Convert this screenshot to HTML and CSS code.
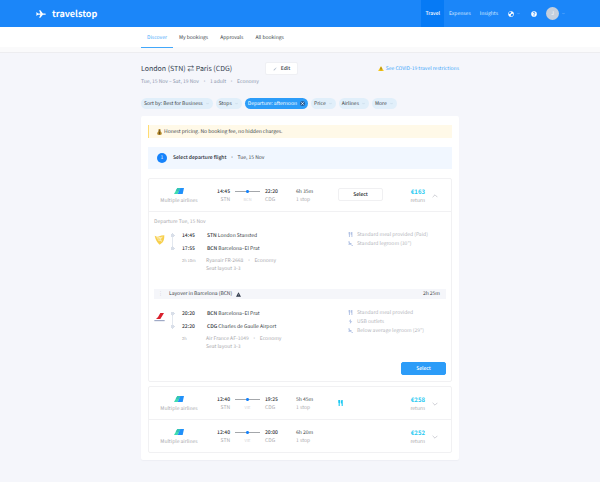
FILE: index.html
```html
<!DOCTYPE html>
<html lang="en">
<head>
  <meta charset="UTF-8">
  <meta name="viewport" content="width=device-width, initial-scale=1.0">
  <title>Travelstop</title>
  <link rel="stylesheet" href="styles.css">
</head>
<body>
  <!-- Shared icons -->
  <svg class="sprite" aria-hidden="true">
    <symbol id="down" viewBox="0 0 10 10"><path d="M1 3l4 4 4-4" fill="none" stroke="currentColor" stroke-width="1.5"/></symbol>
    <symbol id="up" viewBox="0 0 10 10"><path d="M1 7l4-4 4 4" fill="none" stroke="currentColor" stroke-width="1.5"/></symbol>
    <symbol id="multi" viewBox="0 0 30 18"><path d="M10 0h11L11 18H0z" fill="#3fdcb0"/><path d="M19 0h11l-4 18H11z" fill="#2090fa"/><path d="M10 0h9l-5 9H5z" fill="#35c3b5"/></symbol>
    <symbol id="meal" viewBox="0 0 12 16"><path d="M0 0h5v7L4 8v8H1V8L0 7zM7 2l2-2h3v16H9V9H7z" fill="currentColor"/></symbol>
    <symbol id="seat" viewBox="0 0 16 14"><path d="M1 0h4l1 5h5v4H3zM0 10h10v2H1zM11 9l2 3h3v2h-5z" fill="currentColor"/></symbol>
    <symbol id="usb" viewBox="0 0 12 14"><path d="M7 0L1 7h4l-1 7 7-8H7z" fill="currentColor"/></symbol>
  </svg>

  <header class="header">
    <a class="brand" href="#">
      <svg class="brand-icon" viewBox="0 0 32 24"><path d="M0 7h3l4 3h7L10 0h4l8 10h6q4 0 4 2t-4 2h-6l-8 10h-4l4-10H7l-4 3H0l2-5z" fill="#fff"/></svg>
      travelstop
    </a>
    <nav class="main-nav">
      <a class="active" href="#">Travel</a>
      <a href="#">Expenses</a>
      <a href="#">Insights</a>
      <button class="icon-button" aria-label="Language">
        <svg class="round-icon" viewBox="0 0 16 16"><circle cx="8" cy="8" r="7.500" fill="#fff"/><path d="M3 3l4-1 2 2-3 2 1 2H4L2 6zM9 8l4-1 1 2-2 4-3 1-2-2z" fill="#1b86f9"/></svg>
        <svg class="chevron"><use href="#down"/></svg>
      </button>
      <button class="help-button" aria-label="Help">
        <svg class="round-icon" viewBox="0 0 16 16"><circle cx="8" cy="8" r="7.500" fill="#fff"/><path d="M5.500 6q0-2.500 2.500-2.500T10.500 6Q10.500 7.500 8 8v2M8 11v2" fill="none" stroke="#1b86f9" stroke-width="2"/></svg>
      </button>
      <button class="icon-button" aria-label="Account">
        <span class="avatar">J</span>
        <svg class="chevron"><use href="#down"/></svg>
      </button>
    </nav>
  </header>

  <div class="sub-header">
    <nav class="tabs">
      <a class="active" href="#">Discover</a>
      <a href="#">My bookings</a>
      <a href="#">Approvals</a>
      <a href="#">All bookings</a>
    </nav>
  </div>

  <main class="content">
    <div class="trip">
      <h1>London (STN) ⇄ Paris (CDG)</h1>
      <button class="edit"><svg class="pencil" viewBox="0 0 10 10"><path d="M1 9l1-3 6-5 1 1-5 6z" fill="#b4bfcd"/></svg>Edit</button>
      <a class="covid" href="#"><svg class="warning" viewBox="0 0 16 14"><path d="M8 0l8 14H0z" fill="#f5c518"/><path d="M8 4v5M8 10v2" stroke="#544618" stroke-width="2"/></svg>See COVID-19 travel restrictions</a>
    </div>
    <p class="trip-info">Tue, 15 Nov – Sat, 19 Nov<i>·</i>1 adult<i>·</i>Economy</p>

    <div class="filters">
      <button>Sort by: Best for Business<svg class="chevron"><use href="#down"/></svg></button>
      <button>Stops<svg class="chevron"><use href="#down"/></svg></button>
      <button class="selected">Departure: afternoon<svg class="clear" viewBox="0 0 10 10"><circle cx="5" cy="5" r="5" fill="#275f9b"/><path d="M3 3l4 4M7 3L3 7" stroke="#fff" stroke-width="2"/></svg></button>
      <button>Price<svg class="chevron"><use href="#down"/></svg></button>
      <button>Airlines<svg class="chevron"><use href="#down"/></svg></button>
      <button>More<svg class="chevron"><use href="#down"/></svg></button>
    </div>

    <section class="results">
      <div class="notice"><svg class="money" viewBox="0 0 14 18"><path d="M4 0h6L9 5q5 5 5 9 0 4-7 4t-7-4q0-4 5-9z" fill="#b58a2c"/><path d="M4 5h6M7 8v8M5 10h4M5 14h4" stroke="#5d4515" stroke-width="2"/></svg>Honest pricing. No booking fee, no hidden charges.</div>

      <div class="step">
        <span class="step-number">1</span>
        <b>Select departure flight</b><i>·</i>Tue, 15 Nov
      </div>

      <article class="flights">
        <div class="flight">
          <div class="airline"><svg><use href="#multi"/></svg>Multiple airlines</div>
          <div class="from"><b>14:45</b><span>STN</span></div>
          <div class="route"><div class="line"></div><span>BCN</span></div>
          <div class="to"><b>22:20</b><span>CDG</span></div>
          <div class="duration">6h 35m<span>1 stop</span></div>
          <div class="action"><button class="select">Select</button></div>
          <div class="price"><b>€163</b><span>return</span></div>
          <button class="toggle" aria-label="Hide details"><svg><use href="#up"/></svg></button>
        </div>

        <div class="details">
          <p class="date">Departure Tue, 15 Nov</p>
          <div class="segment">
            <svg class="carrier" viewBox="0 0 33 33"><path d="M2 5q9 5 14 2t15-3q0 15-5 21l-9 7Q6 23 2 5z" fill="#f7cf4c"/><path d="M7 9q9 5 19 0M9 14q8 4 15-3M12 18q7 4 10 1M16 9l7 14" fill="none" stroke="#fff" stroke-width="1.500"/></svg>
            <div class="track"></div>
            <div class="times"><b>14:45</b><b>17:55</b><span>2h 10m</span></div>
            <div class="stops">
              <p><b>STN</b> London Stansted</p>
              <p><b>BCN</b> Barcelona–El Prat</p>
              <small>Ryanair FR-2668<i>·</i>Economy<br>Seat layout 3-3</small>
            </div>
            <ul class="amenities">
              <li><svg><use href="#meal"/></svg>Standard meal provided (Paid)</li>
              <li><svg><use href="#seat"/></svg>Standard legroom (30")</li>
            </ul>
          </div>

          <div class="layover">
            <span class="dots">⋮</span>Layover in Barcelona (BCN)
            <svg class="alert" viewBox="0 0 16 14"><path d="M8 0l8 14H0z" fill="#313b4b"/><path d="M8 5v4M8 10v2" stroke="#aeb5c0" stroke-width="1.500"/></svg>
            <span class="wait">2h 25m</span>
          </div>

          <div class="segment">
            <svg class="carrier" viewBox="0 0 33 33"><path d="M19 3h11L19 21H6q7-5 13-18z" fill="#d9202c"/><path d="M1 26h31" stroke="#536799" stroke-width="2"/></svg>
            <div class="track"></div>
            <div class="times"><b>20:20</b><b>22:20</b><span>2h</span></div>
            <div class="stops">
              <p><b>BCN</b> Barcelona–El Prat</p>
              <p><b>CDG</b> Charles de Gaulle Airport</p>
              <small>Air France AF-1049<i>·</i>Economy<br>Seat layout 3-3</small>
            </div>
            <ul class="amenities">
              <li><svg><use href="#meal"/></svg>Standard meal provided</li>
              <li><svg><use href="#usb"/></svg>USB outlets</li>
              <li><svg><use href="#seat"/></svg>Below average legroom (29")</li>
            </ul>
          </div>
          <button class="select primary">Select</button>
        </div>
      </article>

      <article class="flights">
        <div class="flight">
          <div class="airline"><svg><use href="#multi"/></svg>Multiple airlines</div>
          <div class="from"><b>12:40</b><span>STN</span></div>
          <div class="route"><div class="line"></div><span>VIE</span></div>
          <div class="to"><b>19:25</b><span>CDG</span></div>
          <div class="duration">5h 45m<span>1 stop</span></div>
          <div class="action"><svg class="meal"><use href="#meal"/></svg></div>
          <div class="price"><b>€258</b><span>return</span></div>
          <button class="toggle" aria-label="Show details"><svg><use href="#down"/></svg></button>
        </div>
        <div class="flight">
          <div class="airline"><svg><use href="#multi"/></svg>Multiple airlines</div>
          <div class="from"><b>12:40</b><span>STN</span></div>
          <div class="route"><div class="line"></div><span>VIE</span></div>
          <div class="to"><b>20:00</b><span>CDG</span></div>
          <div class="duration">6h 20m<span>1 stop</span></div>
          <div class="action"></div>
          <div class="price"><b>€252</b><span>return</span></div>
          <button class="toggle" aria-label="Show details"><svg><use href="#down"/></svg></button>
        </div>
      </article>
    </section>
  </main>
</body>
</html>
```
FILE: styles.css
```css
* {
  margin: 0;
  padding: 0;
  box-sizing: border-box;
}

body {
  font-family: "Noto Sans CJK SC", "Open Sans", sans-serif;
  font-size: 5px;
  line-height: 8px;
  text-rendering: geometricPrecision;
  color: #3a3f47;
  background: #f5f6fb;
}

a {
  color: inherit;
  text-decoration: none;
}

button {
  font: inherit;
  color: inherit;
  text-rendering: inherit;
  border: none;
  background: none;
  cursor: pointer;
}

svg {
  display: block;
  flex: none;
}

i {
  font-style: normal;
  margin: 0 3px;
  opacity: 0.7;
}

.sprite {
  display: none;
}

.chevron {
  width: 3px;
  height: 3px;
}

/* Header */
.header {
  display: flex;
  justify-content: space-between;
  height: 27px;
  padding: 0 35px 0 36px;
  color: #fff;
  background: #1b86f9;
}

.brand {
  display: flex;
  align-items: center;
  gap: 6px;
  font-size: 9px;
  font-weight: bold;
}

.brand-icon {
  width: 10px;
  height: 8px;
}

.main-nav {
  display: flex;
  gap: 1px;
  color: #dcecff;
}

.main-nav a {
  display: flex;
  align-items: center;
  padding: 0 4px;
}

.main-nav .active {
  color: #fff;
  font-weight: 500;
  background: #067af5;
}

.icon-button,
.help-button {
  display: flex;
  align-items: center;
  gap: 3px;
  padding-left: 5px;
  color: #8bc3ff;
}

.help-button {
  padding: 0 3px 0 10px;
}

.round-icon {
  width: 6px;
  height: 6px;
}

.avatar {
  width: 13px;
  height: 13px;
  border-radius: 50%;
  line-height: 13px;
  color: #fff;
  background: #c5cfdd;
}

.sub-header {
  height: 26px;
  background: linear-gradient(#fff 20px, #fafafb 20px);
  border-bottom: 1px solid #ededf0;
}

.tabs,
.content {
  max-width: 318px;
  margin: 0 auto;
}

.tabs {
  display: flex;
}

.tabs a {
  padding: 2px 6px 0;
  line-height: 18px;
  border-bottom: 1px solid transparent;
}

.tabs .active {
  color: #42a7fa;
  border-color: #42a7fa;
}

/* Trip summary */
.content {
  padding: 9px 0 22px;
}

.trip {
  display: flex;
  align-items: center;
}

h1 {
  width: 124px;
  font-size: 7px;
  font-weight: normal;
  color: #343e50;
}

.edit {
  display: flex;
  align-items: center;
  justify-content: center;
  gap: 4px;
  width: 33px;
  height: 13px;
  font-weight: 500;
  background: #fff;
  border: 1px solid #eff0f4;
  border-radius: 2px;
}

.pencil {
  width: 4px;
  height: 4px;
}

.covid {
  display: flex;
  align-items: center;
  gap: 2px;
  margin-left: auto;
  color: #42a7fa;
}

.warning {
  width: 6px;
  height: 5px;
}

.trip-info {
  margin-top: 3px;
  color: #8995ac;
}

.filters {
  display: flex;
  gap: 3px;
  margin: 12px 0 7px;
}

.filters button {
  display: flex;
  align-items: center;
  gap: 3px;
  height: 11px;
  padding: 0 4px 0 3px;
  border-radius: 6px;
  background: #e1effa;
}

.filters .chevron {
  color: #b6cadb;
}

.filters .selected {
  padding-right: 3px;
  color: #fff;
  background: #2c9cf8;
}

.clear {
  width: 5px;
  height: 5px;
}

/* Results */
.results {
  padding: 9px 7px 7px;
  background: #fff;
  border-radius: 2px;
  box-shadow: 0 1px 1px #eeeff4;
}

.notice {
  display: flex;
  align-items: center;
  gap: 2px;
  height: 13px;
  padding-left: 8px;
  background: #fff9e8;
  border-left: 1px solid #ffdc73;
}

.money {
  width: 5px;
  height: 6px;
}

.step {
  display: flex;
  align-items: center;
  height: 22px;
  margin: 9px 0;
  padding-left: 9px;
  background: #f1f7ff;
}

.step b {
  font-weight: 500;
  color: #23282f;
}

.step-number {
  width: 10px;
  height: 10px;
  margin-right: 6px;
  border-radius: 50%;
  line-height: 10px;
  text-align: center;
  color: #fff;
  background: #1683fb;
}

.flights {
  margin-top: 4px;
  border: 1px solid #f1f1f3;
  border-radius: 2px;
}

.flight {
  display: grid;
  grid-template-columns: 60px 21px 35px 31px 36px 1fr 40px 26px;
  height: 32px;
  padding-top: 9px;
}

.flight + .flight {
  height: 33px;
}

.flight + .flight,
.details {
  border-top: 1px solid #f1f1f3;
}

.flight span {
  display: block;
  color: #a9a9ad;
}

.flight b {
  display: block;
  font-weight: 500;
  color: #303338;
}

.airline {
  display: flex;
  flex-direction: column;
  align-items: center;
  gap: 3px;
  color: #a9a9ad;
}

.airline svg {
  width: 10px;
  height: 6px;
}

.from,
.price {
  text-align: right;
}

.route {
  padding: 2px 5px 0;
  text-align: center;
}

.line {
  height: 3px;
  background:
    radial-gradient(circle, #1683fb 1px, transparent 2px),
    linear-gradient(#a4a7ab, #a4a7ab) center / 100% 1px no-repeat;
}

.route span {
  margin-top: 3px;
  font-size: 4px;
  color: #d3d3d7;
}

.action {
  padding-left: 6px;
}

.select {
  display: block;
  width: 45px;
  height: 13px;
  font-weight: 500;
  color: #25282d;
  border: 1px solid #f0f0f2;
  border-radius: 2px;
}

.meal {
  width: 5px;
  height: 6px;
  margin-top: 4px;
  color: #1dc9f2;
}

.flight .price b {
  margin-bottom: 1px;
  font-size: 6px;
  font-weight: bold;
  color: #1dc9f2;
}

.toggle {
  display: flex;
  height: 15px;
  padding-left: 7px;
  align-items: center;
  color: #c9cbd1;
}

.toggle svg {
  width: 6px;
  height: 6px;
}

/* Flight details */
.details {
  padding: 6px 5px;
}

.date {
  color: #a9a9ad;
}

.segment {
  display: grid;
  grid-template-columns: 16px 12px 25px 141px 1fr;
  min-height: 55px;
  margin-top: 3px;
}

.carrier {
  width: 11px;
  height: 11px;
  margin-top: 5px;
}

.track {
  width: 5px;
  height: 18px;
  margin-top: 4px;
  background:
    radial-gradient(circle, #d9dfe9 2px, transparent 2px) top / 5px 5px no-repeat,
    radial-gradient(circle, #d9dfe9 2px, transparent 2px) bottom / 5px 5px no-repeat,
    linear-gradient(#e3e8ef, #e3e8ef) center / 1px 14px no-repeat;
}

.times b,
.stops p {
  display: block;
  line-height: 13px;
}

.segment b {
  font-weight: 500;
  color: #303338;
}

.times span,
.stops small {
  display: block;
  margin-top: 2px;
  font-size: 5px;
  color: #a9a9ad;
}

.times span {
  font-size: 4px;
}

.stops small {
  margin-left: -1px;
}

.amenities {
  list-style: none;
  line-height: 9px;
  color: #b4b6bc;
  padding-top: 1px;
}

.amenities li {
  display: flex;
  align-items: center;
  gap: 4px;
}

.amenities svg {
  width: 5px;
  height: 5px;
  color: #b2c2e4;
}

.layover {
  display: flex;
  align-items: center;
  height: 10px;
  margin: 5px 0 8px;
  padding-right: 6px;
  background: #f5f6fa;
}

.dots {
  width: 15px;
  padding-left: 4px;
  color: #b8bdc8;
}

.alert {
  width: 5px;
  height: 5px;
  margin-left: 4px;
}

.wait {
  margin-left: auto;
}

.primary {
  margin-left: auto;
  color: #fff;
  background: #2c9cf8;
  border-color: #2c9cf8;
}
```
